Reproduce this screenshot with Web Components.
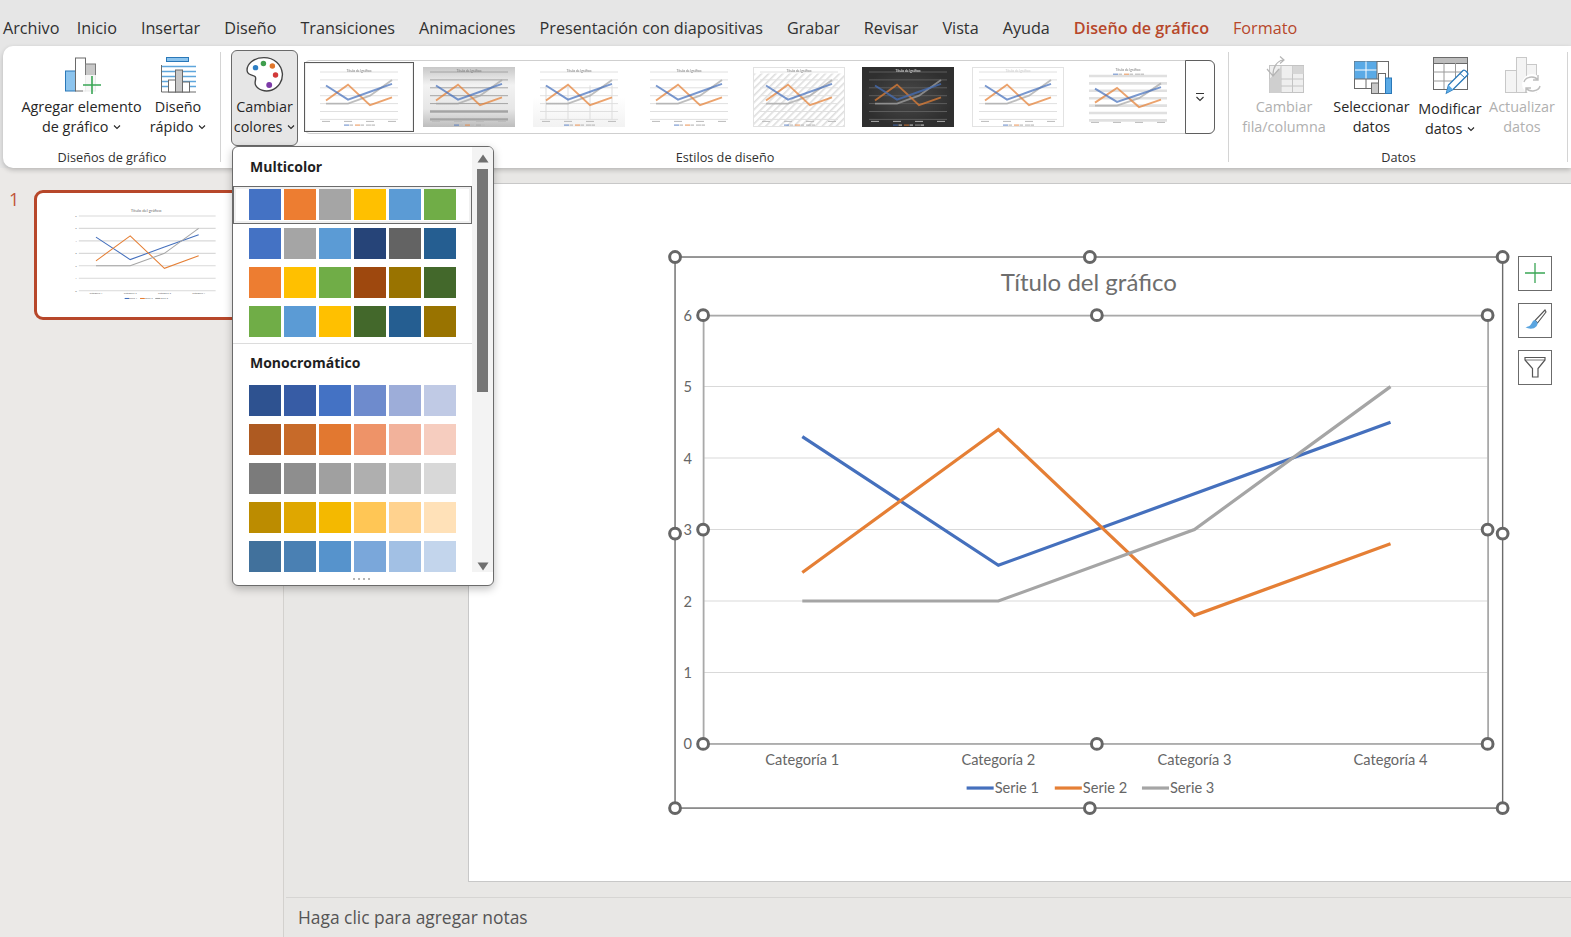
<!DOCTYPE html>
<html lang="es">
<head>
<meta charset="utf-8">
<title>Diseño de gráfico</title>
<style>
  html, body { margin: 0; height: 100%; overflow: hidden; background: #e6e6e6; }
  body { font-family: "Open Sans", "Noto Sans", sans-serif; color: #262626; }
</style>
</head>
<body>
<ppt-app></ppt-app>

<script>
// datos del gráfico, los mismos en todas las vistas
const SERIES = [
  { name: "Serie 1", color: "#4570bd", values: [4.3, 2.5, 3.5, 4.5] },
  { name: "Serie 2", color: "#e57f35", values: [2.4, 4.4, 1.8, 2.8] },
  { name: "Serie 3", color: "#a5a5a5", values: [2, 2, 3, 5] },
];

function polyPoints(values, x0, dx, yZero, unit) {
  return values.map((v, i) => `${x0 + i * dx},${yZero - v * unit}`).join(" ");
}

// helper para no repetir el patrón de siempre
function define(tag, html, init) {
  customElements.define(tag, class extends HTMLElement {
    connectedCallback() {
      if (this.shadowRoot) return;
      this.attachShadow({ mode: "open" });
      this.shadowRoot.innerHTML = typeof html === "function" ? html(this) : html;
      if (init) init(this);
    }
  });
}

define("ppt-chev", `<style>:host{display:inline}</style><svg width="8" height="6" viewBox="0 0 8 6" style="margin-left:1px;vertical-align:2px"><path d="M1 1.5 4 4.5 7 1.5" fill="none" stroke="currentColor" stroke-width="1.1"/></svg>`);

define("ppt-tabs", `
  <style>
    :host { display: flex; height: 46px; flex: none; box-sizing: border-box; padding: 18px 0 0 3px; gap: 24px;
            font-size: 16.2px; line-height: 20px; color: #303030; white-space: nowrap; }
  </style>
  <slot></slot>`);

define("ppt-ribbon", `
  <style>
    :host { display: flex; height: 122px; flex: none; margin-left: 3px; background: #fff; border-radius: 10px 0 0 10px;
            box-shadow: 0 2px 5px rgba(0,0,0,.22); position: relative; z-index: 2; }
  </style>
  <slot></slot>`);

define("ribbon-group", (el) => `
  <style>
    :host { display: flex; flex-direction: column; box-sizing: border-box; height: 122px; position: relative; flex: none; }
    .body { display: flex; flex: 1; padding-left: var(--pad, 0); padding-top: 4px; min-height: 0; }
    .label { font-size: 12.7px; line-height: 18px; height: 18px; text-align: center; margin-bottom: 2px; color: #303030; }
    :host([divider])::after { content: ""; position: absolute; right: 0; top: 6px; bottom: 6px; width: 1px; background: #d4d4d4; }
  </style>
  <div class="body"><slot></slot></div>
  <div class="label">${el.getAttribute("label")}</div>`);

define("ribbon-button", `
  <style>
    :host { display: flex; flex-direction: column; align-items: center; box-sizing: border-box; flex: none; height: 96px;
            padding-top: 5px; font-size: 14.4px; line-height: 20px; text-align: center; color: #262626; white-space: nowrap; }
    :host([disabled]) { color: #b0b0b0; }
    :host([active]) { background: #e6e6e6; border: 1px solid #6a6a6a; border-radius: 6px; padding-top: 4px; }
    .icon { height: 42px; display: flex; align-items: flex-start; justify-content: center; }
    .text { margin-top: var(--shift, 0); }
  </style>
  <div class="icon"><slot name="icon"></slot></div>
  <div class="text"><slot></slot></div>`);

// miniatura de la galería de estilos
define("style-thumb", (el) => {
  const v = +el.getAttribute("variant");
  const bgs = { 2: "url(#g2)", 3: "url(#g3)", 5: "url(#h5)", 6: "url(#g6)", 8: "#fff" };
  const bg = bgs[v] || "#fff";
  const gridCol = v === 6 ? "#5c5c5c" : v === 2 ? "#a4a4a4" : "#e0e0e0";
  const top = v === 8 ? 9 : 5, unit = v === 8 ? 7.4 : 7.9;
  const zero = top + 6 * unit;
  let grid = "";
  for (let i = 0; i <= 6; i++) {
    const y = zero - i * unit;
    const w = v === 8 ? 2.6 : v === 2 && i < 2 ? 2.4 : 1;
    grid += `<line x1="7" x2="85" y1="${y}" y2="${y}" stroke="${gridCol}" stroke-width="${w}"/>`;
  }
  if (v === 3) [13, 35, 57, 79].forEach((x) => grid += `<line x1="${x}" x2="${x}" y1="${zero - 4.3 * unit}" y2="${zero}" stroke="#ddd" stroke-width="1"/>`);
  const lines = SERIES.slice().reverse().map((s) =>
    `<polyline points="${polyPoints(s.values, 13, 22, zero, unit)}" fill="none" stroke="${s.color}" stroke-width="1.9" opacity=".72"/>`).join("");
  const legendY = v === 8 ? 6.6 : 57.5;
  const legend = SERIES.map((s, i) =>
    `<rect x="${31 + i * 11}" y="${legendY}" width="5" height="1.2" fill="${s.color}" opacity=".7"/><rect x="${36.5 + i * 11}" y="${legendY}" width="3.5" height="1.2" fill="#bbb"/>`).join("");
  const cats = [13, 35, 57, 79].map((x) => `<rect x="${x - 4}" y="${zero + 1.5}" width="8" height="1" fill="${v === 6 ? "#aaa" : "#bbb"}"/>`).join("");
  const titleCol = v === 6 ? "#eee" : v === 7 ? "#ccc" : "#777";
  const frame = v === 5 || v === 7 ? `<rect x=".5" y=".5" width="91" height="59" fill="none" stroke="#e2e2e2"/>` : "";
  const titleBar = v === 5 ? `<rect x="1" y="1" width="90" height="5.5" fill="#fff"/>` : "";
  return `
  <style>
    :host { display: flex; align-items: center; justify-content: center; box-sizing: border-box; width: 109.9px; height: 70px; flex: none; }
    :host([selected]) { border: 1px solid #5a5a5a; box-shadow: inset 0 0 0 1px #f0f0f0; }
    svg { display: block; filter: blur(.45px); }
  </style>
  <svg width="92" height="60" viewBox="0 0 92 60">
    <defs>
      <linearGradient id="g2" x1="0" y1="0" x2="0" y2="1"><stop offset="0" stop-color="#c8c8c8"/><stop offset=".3" stop-color="#f2f2f2"/><stop offset=".7" stop-color="#e6e6e6"/><stop offset="1" stop-color="#bdbdbd"/></linearGradient>
      <linearGradient id="g3" x1="0" y1="0" x2="0" y2="1"><stop offset=".5" stop-color="#fff"/><stop offset="1" stop-color="#f2f2f2"/></linearGradient>
      <radialGradient id="g6"><stop offset="0" stop-color="#4a4a4a"/><stop offset="1" stop-color="#2f2f2f"/></radialGradient>
      <pattern id="h5" width="5" height="5" patternUnits="userSpaceOnUse" patternTransform="rotate(45)"><rect width="5" height="5" fill="#fff"/><rect width="1.6" height="5" fill="#dedede"/></pattern>
    </defs>
    <rect width="92" height="60" fill="${bg}"/>${frame}${titleBar}
    ${grid}${lines}${cats}${legend}
    <text x="46" y="${v === 8 ? 4.4 : 4.6}" font-size="3.4" text-anchor="middle" fill="${titleCol}" font-family="Lato, sans-serif">Título del gráfico</text>
  </svg>`;
});

define("style-gallery", `
  <style>
    :host { display: flex; align-items: center; box-sizing: border-box; width: 911px; height: 74px; margin: 10px 0 0 6px; flex: none;
            border: 1px solid #cfcfcf; border-radius: 6px; position: relative; }
    .more { margin-left: auto; width: 30px; height: 74px; box-sizing: border-box; margin-right: -1px; flex: none;
            border: 1px solid #5f5f5f; border-radius: 0 6px 6px 0; display: flex; align-items: center; justify-content: center; background: #fff; }
    .list { display: flex; margin-left: -1px; }
  </style>
  <div class="list"><slot></slot></div>
  <div class="more"><svg width="10" height="10" viewBox="0 0 10 10"><path d="M1 1.5H9" stroke="#333" stroke-width="1"/><path d="M1.5 5 5 8.5 8.5 5" fill="none" stroke="#333" stroke-width="1.1"/></svg></div>`);

// el gráfico de la diapositiva; con "thumb" sale sin tiradores, para el panel izquierdo
define("ppt-chart", (el) => {
  const thumb = el.hasAttribute("thumb");
  const x0 = 801, dx = 195.7, zero = 742, unit = 71.33;
  const lineW = thumb ? 6 : 3.2, gridW = thumb ? 6 : 1;
  let grid = "", axis = "";
  for (let i = 1; i <= 5; i++) grid += `<line x1="703" x2="1485" y1="${zero - i * unit}" y2="${zero - i * unit}" stroke="#d9d9d9" stroke-width="${gridW}"/>`;
  for (let i = 0; i <= 6; i++) axis += `<text x="691" y="${zero - i * unit + 5.5}" text-anchor="end">${i}</text>`;
  const cats = [0, 1, 2, 3].map((i) => `<text x="${x0 + i * dx}" y="763" text-anchor="middle">Categoría ${i + 1}</text>`).join("");
  const series = SERIES.map((s) => `<polyline points="${polyPoints(s.values, x0, dx, zero, unit)}" fill="none" stroke="${s.color}" stroke-width="${lineW}"/>`).join("");
  const legendX = [965, 1053, 1140];
  const legend = SERIES.map((s, i) => `<line x1="${legendX[i]}" x2="${legendX[i] + 27}" y1="786" y2="786" stroke="${s.color}" stroke-width="${lineW}"/><text x="${legendX[i] + 28}" y="791">${s.name}</text>`).join("");
  const handle = ([x, y]) => `<circle cx="${x}" cy="${y}" r="5.4" fill="#fff" stroke="#666" stroke-width="3"/>`;
  const outer = [[674, 256], [1088, 256], [1500, 256], [674, 532], [1500, 532], [674, 806], [1088, 806], [1500, 806]];
  const inner = [[702, 314], [1095, 314], [1485, 314], [702, 528], [1485, 528], [702, 742], [1095, 742], [1485, 742]];
  const frames = thumb
    ? `<line x1="703" x2="1485" y1="314" y2="314" stroke="#d9d9d9" stroke-width="6"/><line x1="703" x2="1485" y1="742" y2="742" stroke="#d9d9d9" stroke-width="6"/>`
    : `<rect x="674" y="256" width="826" height="550" fill="none" stroke="#6b6b6b" stroke-width="1.4"/>
       <rect x="702.5" y="314.5" width="783" height="427.5" fill="none" stroke="#a9a9a9" stroke-width="1.8"/>`;
  return `
  <style>
    :host { display: block; flex: none; }
    svg { display: block; overflow: visible; font-family: Lato, "Liberation Sans", sans-serif; }
    text { fill: #666; font-size: 14.6px; }
    .title { font-size: 24px; fill: #6e6e6e; }
  </style>
  <svg width="${thumb ? 148 : 847.7}" height="${thumb ? 99.75 : 571.1}" viewBox="664 246 846 570">
    ${grid}${frames}
    <text class="title" x="1087" y="290" text-anchor="middle">Título del gráfico</text>
    ${axis}${cats}${series}${legend}
    ${thumb ? "" : outer.concat(inner).map(handle).join("")}
  </svg>`;
});

define("chart-tool", `
  <style>
    :host { display: flex; align-items: center; justify-content: center; width: 34.5px; height: 34.5px; box-sizing: border-box;
            border: 1px solid #6b6b6b; background: #fff; flex: none; }
    ::slotted(svg) { display: block; }
  </style>
  <slot></slot>`);

define("ppt-slide", `
  <style>
    :host { display: flex; align-items: flex-start; box-sizing: border-box; height: 698.5px; margin-left: 184px; background: #fff;
            border-left: 1px solid #c8c8c8; border-top: 1px solid #c8c8c8; border-bottom: 1px solid #c8c8c8;
            padding: 62.5px 0 0 196.3px; }
    .tools { display: flex; flex-direction: column; gap: 12.5px; margin: 9.5px 0 0 5px; }
  </style>
  <slot name="chart"></slot>
  <div class="tools"><slot name="tool"></slot></div>`);

define("slide-thumb", `
  <style>
    :host { display: flex; align-items: flex-start; box-sizing: border-box; margin: 22px 0 0 34px; width: 230px; height: 130px;
            border: 3px solid #b7472a; border-radius: 9px; background: #fff; padding: 11px 0 0 35px; position: relative; }
    .num { position: absolute; left: -28px; top: -5px; color: #c0553a; font-size: 18px; line-height: 22px; }
  </style>
  <span class="num"><slot name="num"></slot></span>
  <slot></slot>`);

define("notes-bar", `
  <style>
    :host { display: flex; align-items: center; box-sizing: border-box; height: 40px; flex: none; padding: 0 0 2px 12px;
            border-top: 1px solid #d6d5d3; margin-left: 2px; font-size: 17.4px; color: #555; }
  </style>
  <slot></slot>`);

define("swatch-row", (el) => {
  const cols = el.getAttribute("colors").split(" ");
  return `
  <style>
    :host { display: flex; gap: 3.5px; box-sizing: border-box; height: 31px; flex: none; margin-left: 16px; }
    i { display: block; width: 31.5px; height: 31px; flex: none; }
  </style>
  ${cols.map((c) => `<i style="background:#${c}"></i>`).join("")}`;
});

define("color-menu", `
  <style>
    :host { position: absolute; left: 232px; top: 146px; width: 262px; height: 440px; box-sizing: border-box; z-index: 5;
            background: #fff; border: 1px solid #6b6b6b; border-radius: 6px; box-shadow: 0 3px 8px rgba(0,0,0,.25);
            display: grid; grid-template-columns: 239px 1fr; overflow: hidden; }
    .list { display: flex; flex-direction: column; overflow: hidden; height: 425px; }
    h3 { margin: 0; padding-left: 17px; font-size: 14px; line-height: 20px; font-weight: 700; color: #1f1f1f; }
    .t1 { margin-top: 10px; height: 20px; }
    .selected { margin-top: 9px; height: 38px; width: 239px; box-sizing: border-box; border: 1px solid #6b6b6b; background: #fff;
                box-shadow: inset 0 0 0 2px #f0f0f0; padding-top: 1.5px; flex: none; display: block; }
    .selected ::slotted(swatch-row) { margin-left: 15px; }
    .rows { display: flex; flex-direction: column; gap: 8px; }
    .multi { margin-top: 4px; }
    hr { border: 0; border-top: 1px solid #dcdcdc; margin: 6px 0 0; width: 239px; flex: none; }
    .t2 { margin-top: 9px; height: 20px; }
    .mono { margin-top: 12px; }
    .bar { background: #f3f3f3; position: relative; height: 425px; display: flex; flex-direction: column; align-items: center; }
    .thumb { width: 11px; height: 223px; background: #767676; margin-top: 6px; }
    .up { margin-top: 7px; display: block; }
    .down { position: absolute; bottom: 1.5px; left: 4.5px; display: block; }
    .grip { grid-column: 1 / 3; height: 13px; display: flex; justify-content: center; align-items: center; gap: 3px; padding-right: 4px; }
    .grip i { width: 2px; height: 2px; background: #b5b5b5; }
  </style>
  <div class="list">
    <h3 class="t1">Multicolor</h3>
    <div class="selected"><slot name="sel"></slot></div>
    <div class="rows multi"><slot name="multi"></slot></div>
    <hr>
    <h3 class="t2">Monocromático</h3>
    <div class="rows mono"><slot name="mono"></slot></div>
  </div>
  <div class="bar">
    <svg class="up" width="12" height="9" viewBox="0 0 12 9"><path d="M6 .5 11.5 8.5H.5Z" fill="#6f6f6f"/></svg>
    <div class="thumb"></div>
    <svg class="down" width="12" height="9" viewBox="0 0 12 9"><path d="M6 8.5 11.5 .5H.5Z" fill="#6f6f6f"/></svg>
  </div>
  <div class="grip"><i></i><i></i><i></i><i></i></div>`);

define("ppt-app", `
  <style>
    :host { display: flex; flex-direction: column; height: 937px; position: relative; overflow: hidden; background: #e6e6e6; }
    .work { display: grid; grid-template-columns: 284px 1fr; flex: 1; background: #e8e7e5; min-height: 0; }
    .pane { border-right: 1px solid #d3d1ce; background: #ebe9e7; }
    .main { display: flex; flex-direction: column; padding-top: 15px; min-width: 0; overflow: hidden; }
    .spacer { height: 15.5px; flex: none; }
    span { display: block; }
    .sel { color: #b7472a; font-weight: 600; position: relative; }
    .sel::after { content: ""; position: absolute; left: 0; right: 0; bottom: -5px; height: 3px; background: #b7472a; }
    .fmt { color: #b7472a; }
    .first { margin-right: -6.7px; }
  </style>
  <ppt-tabs>
    <span class="first">Archivo</span><span>Inicio</span><span>Insertar</span><span>Diseño</span><span>Transiciones</span>
    <span>Animaciones</span><span>Presentación con diapositivas</span><span>Grabar</span><span>Revisar</span><span>Vista</span>
    <span>Ayuda</span><span class="sel">Diseño de gráfico</span><span class="fmt">Formato</span>
  </ppt-tabs>

  <ppt-ribbon>
    <ribbon-group label="Diseños de gráfico" divider style="width:218px;--pad:15px">
      <ribbon-button style="width:127px">
        <svg slot="icon" width="40" height="40" viewBox="0 0 40 40" style="margin-left:3px">
          <rect x="2.500" y="16" width="10" height="20" fill="#8cc4ee" stroke="#2a78b8"/>
          <rect x="12.500" y="3" width="10" height="33" fill="#fff" stroke="#6a6a6a"/>
          <rect x="22.500" y="9" width="10" height="27" fill="#c8c8c8" stroke="#7a7a7a"/>
          <rect x="20" y="20" width="16" height="17" fill="#fff" opacity=".85"/>
          <path d="M29 21V39M20 30H38" stroke="#3aa655" stroke-width="1.6"/>
        </svg>
        Agregar elemento<br>de gráfico <ppt-chev></ppt-chev>
      </ribbon-button>
      <ribbon-button style="width:66px">
        <svg slot="icon" width="40" height="40" viewBox="0 0 40 40">
          <rect x="8.500" y="2.500" width="22" height="4" fill="#8cc4ee" stroke="#2a78b8"/>
          <path d="M3 11.500H38M3 16.500H38M3 21.500H38M3 26.500H38M3 31.500H38" stroke="#5fa6dc" stroke-width="1.6"/>
          <path d="M3.500 10V37H38" fill="none" stroke="#6a6a6a"/>
          <rect x="10.500" y="25" width="7" height="12" fill="#fff" stroke="#6a6a6a"/>
          <rect x="17.500" y="15" width="7" height="22" fill="#c8c8c8" stroke="#6a6a6a"/>
          <rect x="24.500" y="27" width="7" height="10" fill="#fff" stroke="#6a6a6a"/>
        </svg>
        Diseño<br>rápido <ppt-chev></ppt-chev>
      </ribbon-button>
    </ribbon-group>

    <ribbon-group label="Estilos de diseño" divider style="width:1008px;--pad:10px">
      <ribbon-button active style="width:67px">
        <svg slot="icon" width="40" height="40" viewBox="0 0 38 38">
          <path d="M18 2.500C8 2.500 1.500 9 2 15c.4 4.600 6 4 7.500 5.500 2 2-1 4.500.5 8 2 4.500 9 7 15 5 7-2.400 11-9 10.500-16C34.500 9 28 2.500 18 2.500Z" fill="#fff" stroke="#444" stroke-width="1.3"/>
          <circle cx="10" cy="12" r="2.600" fill="#2f7fc4"/><circle cx="17.500" cy="8" r="2.600" fill="#3f9e4d"/>
          <circle cx="26" cy="10.500" r="2.600" fill="#e0762a"/><circle cx="29" cy="19" r="2.600" fill="#d23a3a"/>
          <circle cx="23" cy="28.500" r="2.800" fill="#7d3aa8"/>
        </svg>
        Cambiar<br>colores <ppt-chev></ppt-chev>
      </ribbon-button>
      <style-gallery>
        <style-thumb variant="1" selected></style-thumb><style-thumb variant="2"></style-thumb>
        <style-thumb variant="3"></style-thumb><style-thumb variant="4"></style-thumb>
        <style-thumb variant="5"></style-thumb><style-thumb variant="6"></style-thumb>
        <style-thumb variant="7"></style-thumb><style-thumb variant="8"></style-thumb>
      </style-gallery>
    </ribbon-group>

    <ribbon-group label="Datos" divider style="width:339px;--pad:11px">
      <ribbon-button disabled style="width:88px">
        <svg slot="icon" width="40" height="40" viewBox="0 0 40 40">
          <rect x="5.500" y="10.500" width="34" height="27" fill="#efefef" stroke="#c4c4c4"/>
          <path d="M5.500 24H39.500M5.500 31H39.500M17 11V38M28.500 11V38" stroke="#c4c4c4"/>
          <path d="M5.500 24 17 12V38H5.500Z" fill="#cfcfcf"/><rect x="28.500" y="11" width="11" height="8" fill="#d6d6d6"/>
          <path d="M3 14l6 7 6-7M9 20C9 12 13 6 19 5M16 1.500 20 5l-4 3.500" fill="none" stroke="#b5b5b5" stroke-width="1.200"/>
        </svg>
        Cambiar<br>fila/columna
      </ribbon-button>
      <ribbon-button style="width:87px">
        <svg slot="icon" width="40" height="40" viewBox="0 0 40 40">
          <rect x="2.500" y="6.500" width="34" height="27" fill="#fff" stroke="#6a6a6a"/>
          <path d="M2.500 6.500H25V24H2.500Z" fill="#5aaae6"/><path d="M3 15H25M14 6.500V24" stroke="#fff"/>
          <path d="M2.500 24V33M14 24V33M25 6V24M2 24H36" stroke="#6a6a6a" fill="none"/>
          <rect x="19.500" y="28" width="7" height="10.500" fill="#c8c8c8" stroke="#6a6a6a"/>
          <rect x="26.500" y="18.500" width="7" height="20" fill="#fff" stroke="#6a6a6a"/>
          <rect x="33.500" y="23" width="6" height="15.500" fill="#5aaae6" stroke="#2a78b8"/>
        </svg>
        Seleccionar<br>datos
      </ribbon-button>
      <ribbon-button style="width:70px;--shift:2px">
        <svg slot="icon" width="40" height="40" viewBox="0 0 40 40">
          <rect x="3.500" y="2.500" width="34" height="32" fill="#fff" stroke="#6a6a6a"/>
          <rect x="3.500" y="2.500" width="34" height="6" fill="#bdbdbd" stroke="#6a6a6a"/>
          <path d="M3.500 17H38M3.500 26H26M14 8V34M25.500 8V28" stroke="#9a9a9a"/>
          <path d="M16.500 38l2-8L33 15.500c1.500-1.500 6 2.500 4.500 4.500L23 34.500Z" fill="#fff" stroke="#2a78b8" stroke-width="1.300"/>
          <path d="M16.500 38l2-8 4.500 4.500Z" fill="#5aaae6"/>
          <path d="M30 18.500l5 4.500" stroke="#2a78b8"/>
        </svg>
        Modificar<br>datos <ppt-chev></ppt-chev>
      </ribbon-button>
      <ribbon-button disabled style="width:74px">
        <svg slot="icon" width="40" height="40" viewBox="0 0 40 40">
          <rect x="3.500" y="15.500" width="11" height="22" fill="#f4f4f4" stroke="#c8c8c8"/>
          <rect x="14.500" y="2.500" width="10" height="35" fill="#f4f4f4" stroke="#c8c8c8"/>
          <rect x="24.500" y="9.500" width="10" height="28" fill="#f4f4f4" stroke="#c8c8c8"/>
          <circle cx="30" cy="29" r="10" fill="#fff"/>
          <path d="M22 27c1-5 10-7 14-2M36 20v5h-5M38 31c-1 5-10 7-14 2M24 38v-5h5" fill="none" stroke="#bdbdbd" stroke-width="1.400"/>
        </svg>
        Actualizar<br>datos
      </ribbon-button>
    </ribbon-group>
  </ppt-ribbon>

  <div class="work">
    <div class="pane">
      <slide-thumb><span slot="num">1</span><ppt-chart thumb></ppt-chart></slide-thumb>
    </div>
    <div class="main">
      <ppt-slide>
        <ppt-chart slot="chart"></ppt-chart>
        <chart-tool slot="tool">
          <svg width="24" height="24" viewBox="0 0 24 24"><path d="M12 2V22M2 12H22" stroke="#3aa655" stroke-width="1.300"/></svg>
        </chart-tool>
        <chart-tool slot="tool">
          <svg width="26" height="26" viewBox="0 0 26 26"><path d="M23 3 13 13.500l2.500 2.500L24 5Z" fill="#fff" stroke="#555" stroke-width="1.100"/><path d="M13 13c-3 .5-3 4-5 5.500-1.200 1-3 1.300-4.500 1.700 3 2 8.500 2.200 11-1 1-1.300 1.200-2.800 1-3.700Z" fill="#5aa5e0"/></svg>
        </chart-tool>
        <chart-tool slot="tool">
          <svg width="24" height="24" viewBox="0 0 24 24"><path d="M2 2.500H22V5L15 13.500V22H9.500V13.500L2 5Z" fill="#fff" stroke="#555" stroke-width="1.200"/><path d="M2 5H22" stroke="#555" stroke-width=".8"/></svg>
        </chart-tool>
      </ppt-slide>
      <div class="spacer"></div>
      <notes-bar>Haga clic para agregar notas</notes-bar>
    </div>
  </div>

  <color-menu>
    <swatch-row slot="sel" colors="4472c4 ed7d31 a5a5a5 ffc000 5b9bd5 70ad47"></swatch-row>
    <swatch-row slot="multi" colors="4472c4 a5a5a5 5b9bd5 264478 636363 255e91"></swatch-row>
    <swatch-row slot="multi" colors="ed7d31 ffc000 70ad47 9e480e 997300 43682b"></swatch-row>
    <swatch-row slot="multi" colors="70ad47 5b9bd5 ffc000 43682b 255e91 997300"></swatch-row>
    <swatch-row slot="mono" colors="2e5290 375ca5 4472c4 6e8bcd 9dadd9 c0cae5"></swatch-row>
    <swatch-row slot="mono" colors="ae5a21 c76a29 e27830 ee9368 f2b29b f6cdbf"></swatch-row>
    <swatch-row slot="mono" colors="7b7b7b 8e8e8e a0a0a0 afafaf c3c3c3 d8d8d8"></swatch-row>
    <swatch-row slot="mono" colors="bc8c00 dfa700 f4b900 ffc655 ffd28e ffe1b8"></swatch-row>
    <swatch-row slot="mono" colors="41719c 4a80b3 5693cc 7aa7da a2c0e4 c3d5ec"></swatch-row>
  </color-menu>`);
</script>
</body>
</html>
